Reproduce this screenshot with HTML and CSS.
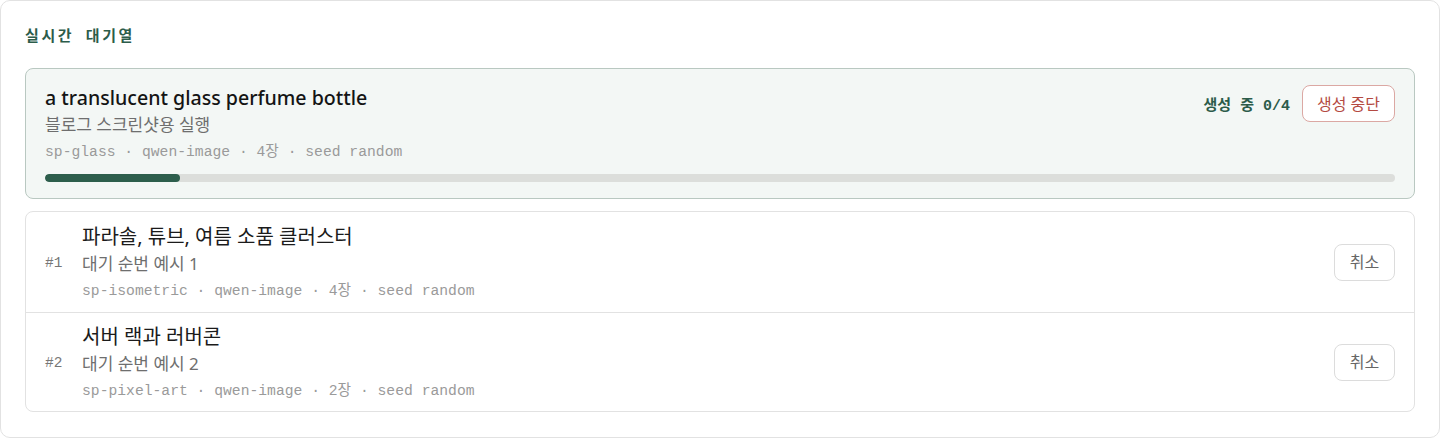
FILE: index.html
```html
<!DOCTYPE html>
<html lang="ko">
<head>
<meta charset="utf-8">
<title>실시간 대기열</title>
<link rel="stylesheet" href="styles.css">
</head>
<body>
<section class="panel">
  <h2 class="panel-title">실시간 대기열</h2>

  <div class="active-job">
    <div class="job-head">
      <div class="job-text">
        <div class="job-title">a translucent glass perfume bottle</div>
        <div class="job-sub">블로그 스크린샷용 실행</div>
        <div class="job-meta">sp-glass · qwen-image · 4장 · seed random</div>
      </div>
      <div class="job-actions">
        <span class="job-status">생성 중 0/4</span>
        <button class="btn btn-danger">생성 중단</button>
      </div>
    </div>
    <div class="progress"><div class="progress-fill" style="width:10%"></div></div>
  </div>

  <ul class="queue">
    <li class="queue-row">
      <span class="queue-index">#1</span>
      <div class="job-text">
        <div class="queue-title">파라솔, 튜브, 여름 소품 클러스터</div>
        <div class="job-sub">대기 순번 예시 1</div>
        <div class="job-meta">sp-isometric · qwen-image · 4장 · seed random</div>
      </div>
      <button class="btn btn-plain">취소</button>
    </li>
    <li class="queue-row">
      <span class="queue-index">#2</span>
      <div class="job-text">
        <div class="queue-title">서버 랙과 러버콘</div>
        <div class="job-sub">대기 순번 예시 2</div>
        <div class="job-meta">sp-pixel-art · qwen-image · 2장 · seed random</div>
      </div>
      <button class="btn btn-plain">취소</button>
    </li>
  </ul>
</section>
</body>
</html>
```

FILE: styles.css
```css
* { box-sizing: border-box; }

html, body {
  margin: 0;
  padding: 0;
  background: #ffffff;
}

body {
  font-family: "Noto Sans", "Noto Sans CJK KR", sans-serif;
  color: #1b1b1b;
}

.panel {
  width: 1440px;
  height: 438px;
  border: 1px solid #e2e2e2;
  border-radius: 10px;
  padding: 23px 24px 24px 24px;
}

.panel-title {
  margin: 0 0 16px 0;
  font-family: "Liberation Mono", "Noto Sans CJK KR", monospace;
  font-size: 15px;
  font-weight: 700;
  line-height: 28px;
  letter-spacing: 2.6px;
  color: #2c5c4a;
}

.active-job {
  background: #f3f7f5;
  border: 1px solid #b9c8c1;
  border-radius: 8px;
  padding: 16px 19px 16px 19px;
}

.job-head {
  display: flex;
  justify-content: space-between;
  align-items: flex-start;
}

.job-text {
  display: flex;
  flex-direction: column;
  flex: 1;
  min-width: 0;
}

.job-title {
  font-size: 19.6px;
  font-weight: 500;
  line-height: 26px;
  color: #141414;
}

.job-sub {
  margin-top: 2px;
  font-size: 17px;
  line-height: 24px;
  color: #6e6e6e;
}

.job-meta {
  margin-top: 5px;
  font-family: "Liberation Mono", "Noto Sans CJK KR", monospace;
  font-size: 14.7px;
  line-height: 20px;
  color: #9a9a9a;
}

.job-actions {
  display: flex;
  align-items: center;
  gap: 12px;
}

.job-status {
  font-family: "Liberation Mono", "Noto Sans CJK KR", monospace;
  font-size: 15px;
  font-weight: 700;
  color: #2c5c4a;
}

.btn {
  font-family: "Noto Sans", "Noto Sans CJK KR", sans-serif;
  font-size: 16px;
  line-height: 20px;
  border-radius: 8px;
  background: #ffffff;
  cursor: pointer;
  height: 37px;
}

.btn-danger {
  border: 1px solid #dba8a3;
  color: #b44a42;
  padding: 0 14px;
}

.btn-plain {
  border: 1px solid #dcdcdc;
  color: #666666;
  padding: 0 12px;
  width: 61px;
}

.progress {
  margin-top: 12px;
  height: 8px;
  border-radius: 4px;
  background: #dcdedb;
  overflow: hidden;
}

.progress-fill {
  height: 100%;
  border-radius: 4px;
  background: #2d5e4c;
}

.queue {
  list-style: none;
  margin: 12px 0 0 0;
  padding: 0;
  border: 1px solid #e2e2e2;
  border-radius: 8px;
}

.queue-row {
  display: flex;
  align-items: center;
  height: 100px;
  padding: 0 19px;
}

.queue-row + .queue-row {
  border-top: 1px solid #e2e2e2;
  height: 99px;
}

.queue-index {
  width: 37px;
  flex: none;
  font-family: "Liberation Mono", "Noto Sans CJK KR", monospace;
  font-size: 14.5px;
  color: #777777;
  margin-top: 2px;
}

.queue-title {
  font-size: 20px;
  line-height: 26px;
  color: #1b1b1b;
}
```
